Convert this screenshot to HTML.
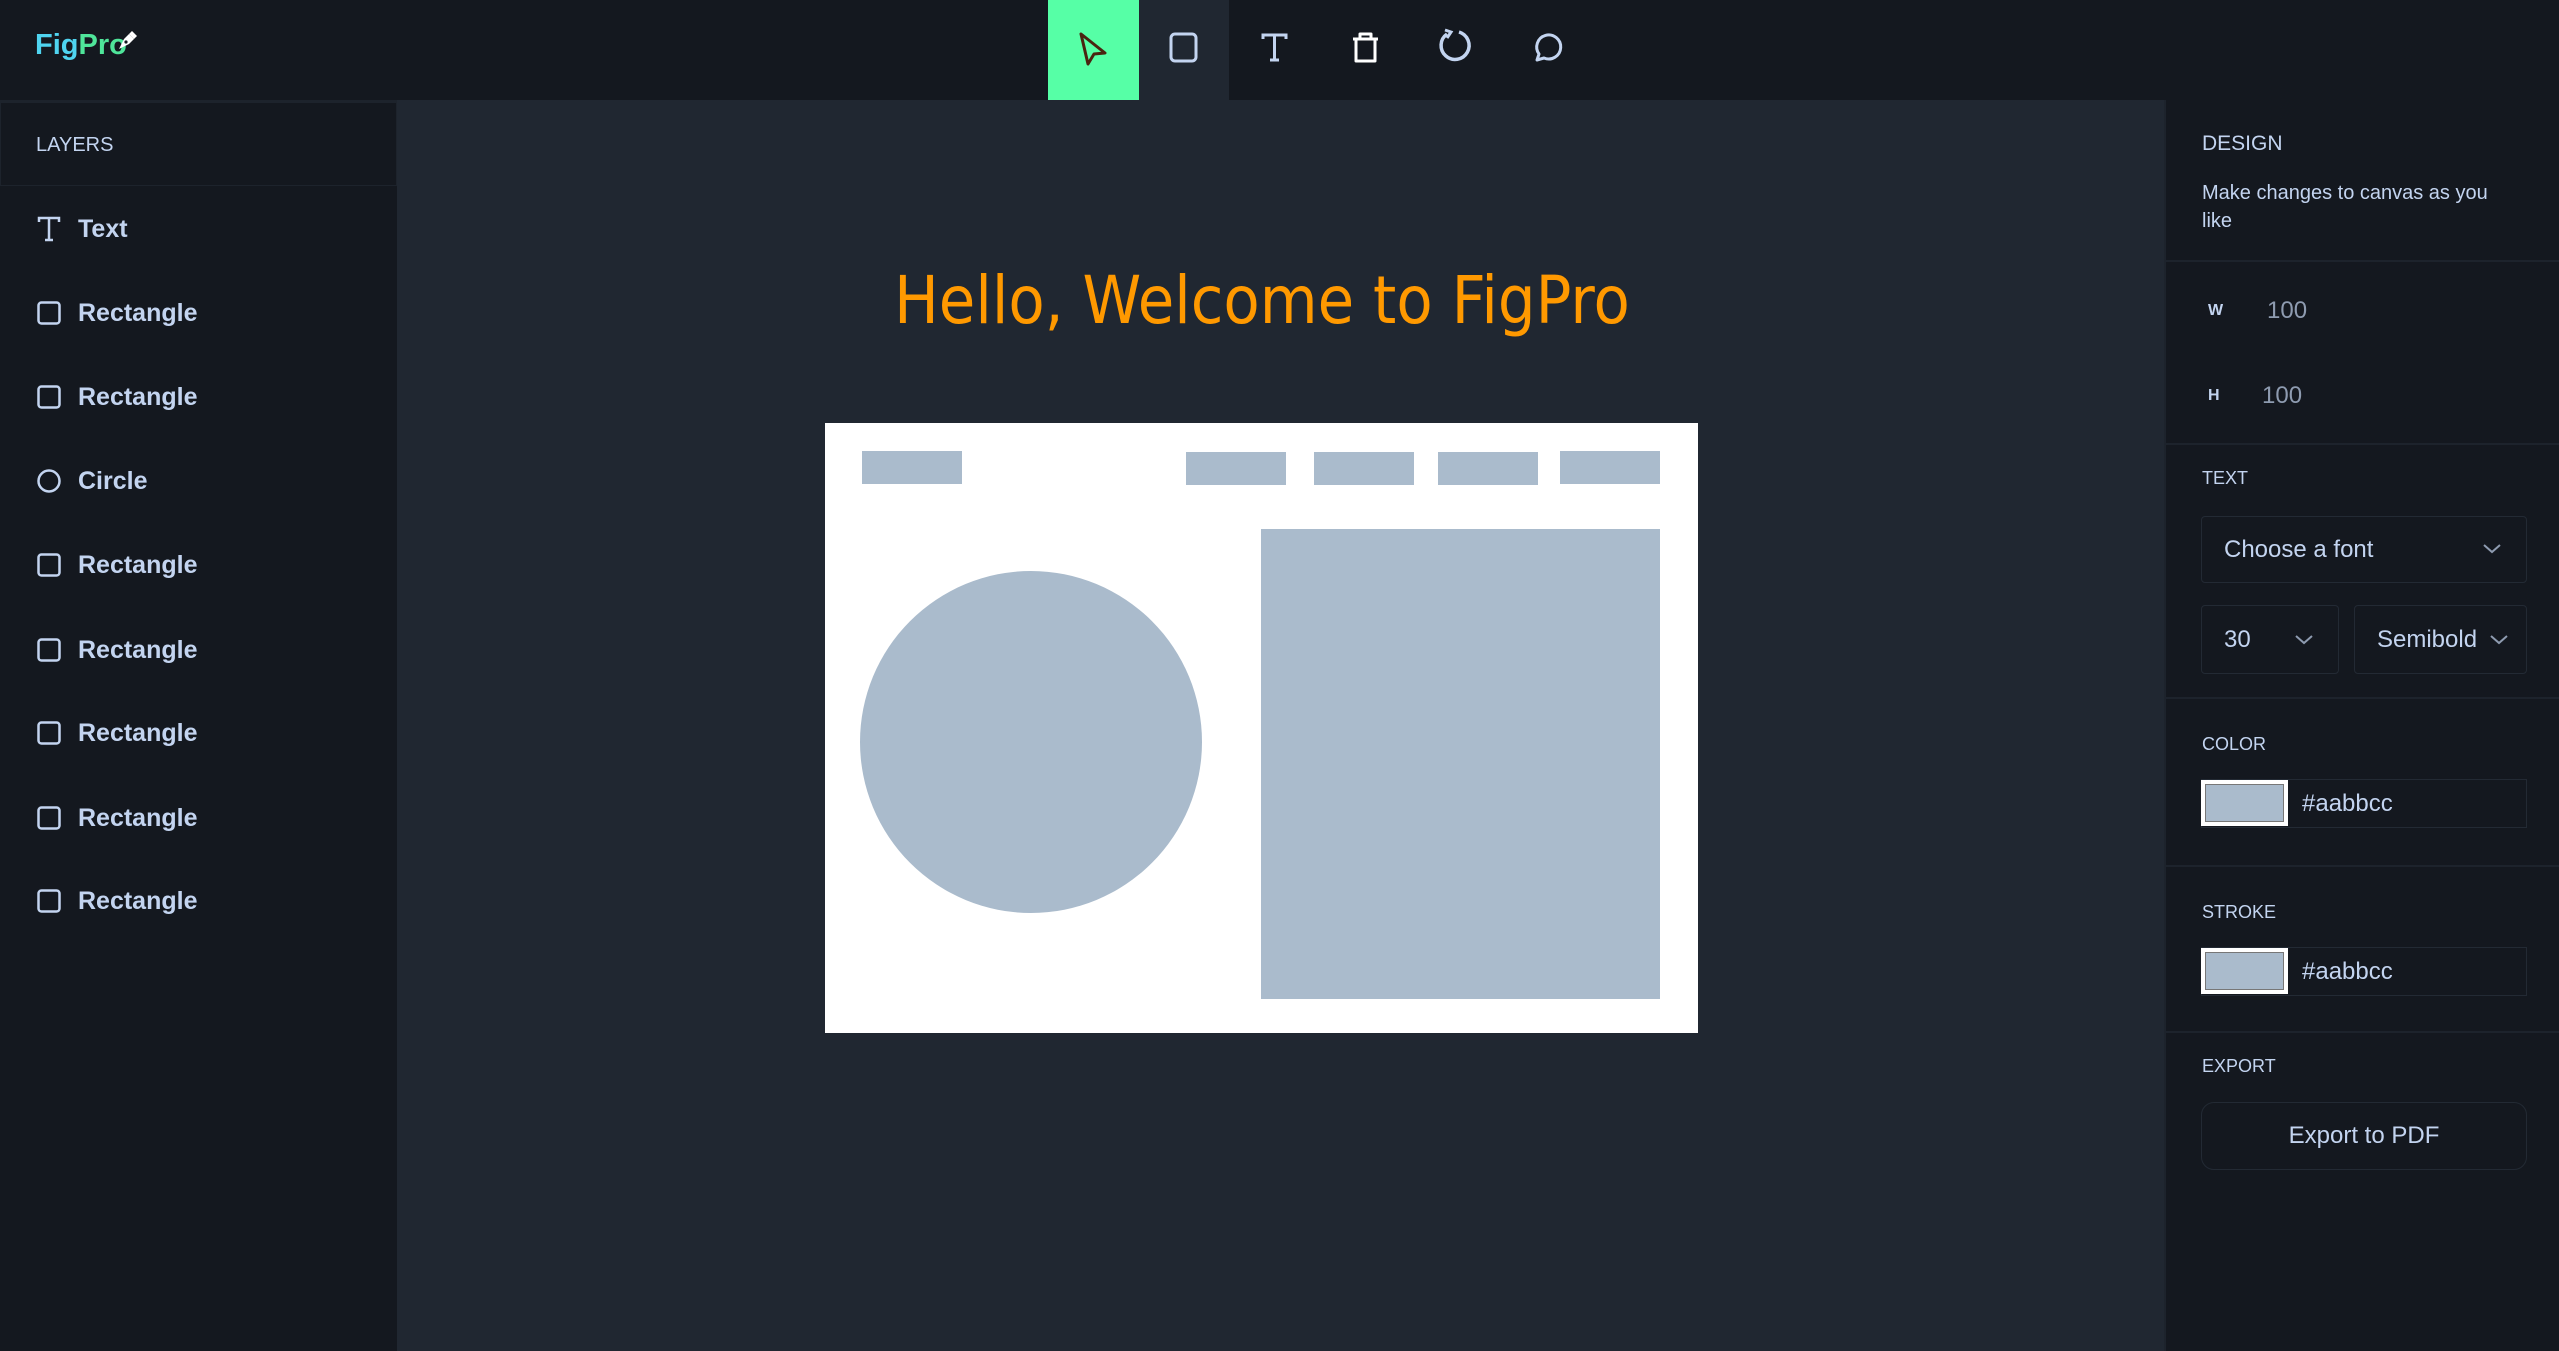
<!DOCTYPE html>
<html><head><meta charset="utf-8"><style>
*{margin:0;padding:0;box-sizing:border-box}
body{width:2559px;height:1351px;background:#202731;font-family:"Liberation Sans",Arial,sans-serif;position:relative;overflow:hidden;color:#c3d4f0}
.abs{position:absolute}
#top{left:0;top:0;width:2559px;height:100px;background:#14181f}
#left{left:0;top:100px;width:397px;height:1251px;background:#14181f;border-top:2px solid #1d232c}
#right{left:2164px;top:100px;width:395px;height:1251px;background:#14181f;border-left:2px solid #1d232c}
.lay{position:absolute;left:37px;font-weight:bold;font-size:25px;color:#c3d4f0;display:flex;align-items:center;height:40px}
.lay svg{margin-right:17px}
.lbl{position:absolute;left:36px;font-size:19px;color:#c3d4f0}
.div{position:absolute;left:0;width:395px;height:2px;background:#1d232c}
.box{position:absolute;border:1.5px solid #232a34;border-radius:4px;font-size:24px;color:#c3d4f0;display:flex;align-items:center}
.sw{position:absolute;left:36px;width:87px;height:46px;background:#fff;padding:4px}
.sw div{width:100%;height:100%;background:#aabbcc;border:1.5px solid #777}
</style></head><body>
<div id="top" class="abs"></div>
<div class="abs" style="left:35px;top:29px;font-size:29px;font-weight:bold"><span style="color:#4fd4f0">Fig</span><span style="color:#4fe59a">Pro</span></div>
<svg class="abs" style="left:116px;top:30px" width="22" height="22" viewBox="0 0 22 22"><path d="M3 19 L8 9 L13 4 L18 9 L13 14 Z" fill="#fff"/><path d="M13 4 L16 1 L21 6 L18 9" fill="#fff"/><circle cx="10" cy="12" r="1.6" fill="#14181f"/></svg>
<div class="abs" style="left:1048px;top:0;width:91px;height:100px;background:#56ffa6"></div>
<div class="abs" style="left:1139px;top:0;width:90px;height:100px;background:#202731"></div>
<svg class="abs" style="left:1073px;top:28px" width="40" height="40" viewBox="0 0 40 40"><path d="M8 6 L32 25 L21 26 L15 36 Z" fill="none" stroke="#4a2410" stroke-width="3" stroke-linejoin="round"/></svg>
<svg class="abs" style="left:1168px;top:31px" width="32" height="32"><rect x="3" y="3" width="25" height="27" rx="4" fill="none" stroke="#c3d4f0" stroke-width="3"/></svg>
<svg class="abs" style="left:1259px;top:31px" width="32" height="32"><path d="M4 8 V4 H27 V8 M15.5 4 V29 M11 29 H20" fill="none" stroke="#c3d4f0" stroke-width="3"/></svg>
<svg class="abs" style="left:1350px;top:30px" width="32" height="34"><path d="M3 9 H28 M10 9 V4 H21 V9 M6 9 V31 H25 V9" fill="none" stroke="#fff" stroke-width="3" stroke-linejoin="round"/></svg>
<svg class="abs" style="left:1437px;top:28px" width="38" height="38"><path d="M10 6 A14 14 0 1 0 22 4" fill="none" stroke="#c3d4f0" stroke-width="3.5"/><path d="M8 2 L14 4 L10 10" fill="none" stroke="#c3d4f0" stroke-width="3"/></svg>
<svg class="abs" style="left:1529px;top:30px" width="36" height="36"><path d="M8 30 L10 24 A12 12 0 1 1 15 28 Z" fill="none" stroke="#c3d4f0" stroke-width="3" stroke-linejoin="round"/></svg>

<div id="left" class="abs">
<div class="abs" style="left:0;top:0;width:397px;height:84px;border:1.5px solid #1d232c"></div>
<div class="abs" style="left:36px;top:32px;font-size:20px;color:#c3d4f0">LAYERS</div>
</div>
<div class="lay" style="top:209px"><svg width="24" height="26"><path d="M2 6 V2 H22 V6 M12 2 V24 M8 24 H16" fill="none" stroke="#c3d4f0" stroke-width="2.5"/></svg>Text</div>
<div class="lay" style="top:293px"><svg width="24" height="24"><rect x="1.5" y="1.5" width="21" height="21" rx="3" fill="none" stroke="#c3d4f0" stroke-width="2.5"/></svg>Rectangle</div>
<div class="lay" style="top:377px"><svg width="24" height="24"><rect x="1.5" y="1.5" width="21" height="21" rx="3" fill="none" stroke="#c3d4f0" stroke-width="2.5"/></svg>Rectangle</div>
<div class="lay" style="top:461px"><svg width="24" height="24"><circle cx="12" cy="12" r="10.5" fill="none" stroke="#c3d4f0" stroke-width="2.5"/></svg>Circle</div>
<div class="lay" style="top:545px"><svg width="24" height="24"><rect x="1.5" y="1.5" width="21" height="21" rx="3" fill="none" stroke="#c3d4f0" stroke-width="2.5"/></svg>Rectangle</div>
<div class="lay" style="top:630px"><svg width="24" height="24"><rect x="1.5" y="1.5" width="21" height="21" rx="3" fill="none" stroke="#c3d4f0" stroke-width="2.5"/></svg>Rectangle</div>
<div class="lay" style="top:713px"><svg width="24" height="24"><rect x="1.5" y="1.5" width="21" height="21" rx="3" fill="none" stroke="#c3d4f0" stroke-width="2.5"/></svg>Rectangle</div>
<div class="lay" style="top:798px"><svg width="24" height="24"><rect x="1.5" y="1.5" width="21" height="21" rx="3" fill="none" stroke="#c3d4f0" stroke-width="2.5"/></svg>Rectangle</div>
<div class="lay" style="top:881px"><svg width="24" height="24"><rect x="1.5" y="1.5" width="21" height="21" rx="3" fill="none" stroke="#c3d4f0" stroke-width="2.5"/></svg>Rectangle</div>

<div class="abs" style="left:830px;top:262px;width:864px;text-align:center;font-family:'Comic Sans MS','DejaVu Sans',cursive;font-size:66px;color:#ff9900;transform:scaleX(0.9);transform-origin:center;white-space:nowrap">Hello, Welcome to FigPro</div>

<div class="abs" style="left:825px;top:423px;width:873px;height:610px;background:#fff">
<div class="abs" style="left:37px;top:28px;width:100px;height:33px;background:#aabbcc"></div>
<div class="abs" style="left:361px;top:29px;width:100px;height:33px;background:#aabbcc"></div>
<div class="abs" style="left:489px;top:29px;width:100px;height:33px;background:#aabbcc"></div>
<div class="abs" style="left:613px;top:29px;width:100px;height:33px;background:#aabbcc"></div>
<div class="abs" style="left:735px;top:28px;width:100px;height:33px;background:#aabbcc"></div>
<div class="abs" style="left:35px;top:148px;width:342px;height:342px;border-radius:50%;background:#aabbcc"></div>
<div class="abs" style="left:436px;top:106px;width:399px;height:470px;background:#aabbcc"></div>
</div>

<div id="right" class="abs">
<div class="lbl" style="top:32px;font-size:21px">DESIGN</div>
<div class="lbl" style="top:79px;font-size:20px;line-height:28px;width:320px">Make changes to canvas as you like</div>
<div class="div" style="top:160px"></div>
<div class="abs" style="left:42px;top:202px;font-size:16px;font-weight:bold">W</div>
<div class="abs" style="left:101px;top:197px;font-size:24px;color:#8e9bb0">100</div>
<div class="abs" style="left:42px;top:287px;font-size:16px;font-weight:bold">H</div>
<div class="abs" style="left:96px;top:282px;font-size:24px;color:#8e9bb0">100</div>
<div class="div" style="top:343px"></div>
<div class="lbl" style="top:368px;font-size:18px">TEXT</div>
<div class="box" style="left:35px;top:416px;width:326px;height:67px;padding-left:22px">Choose a font<svg class="abs" style="left:280px;top:26px" width="20" height="12"><path d="M2 2 L10 9 L18 2" fill="none" stroke="#8e9bb0" stroke-width="2"/></svg></div>
<div class="box" style="left:35px;top:505px;width:138px;height:69px;padding-left:22px">30<svg class="abs" style="left:92px;top:28px" width="20" height="12"><path d="M2 2 L10 9 L18 2" fill="none" stroke="#8e9bb0" stroke-width="2"/></svg></div>
<div class="box" style="left:188px;top:505px;width:173px;height:69px;padding-left:22px">Semibold<svg class="abs" style="left:134px;top:28px" width="20" height="12"><path d="M2 2 L10 9 L18 2" fill="none" stroke="#8e9bb0" stroke-width="2"/></svg></div>
<div class="div" style="top:597px"></div>
<div class="lbl" style="top:634px;font-size:18px">COLOR</div>
<div class="box" style="left:35px;top:679px;width:326px;height:49px;padding-left:100px;border-radius:0">#aabbcc</div>
<div class="sw" style="top:680px;left:35px"><div></div></div>
<div class="div" style="top:765px"></div>
<div class="lbl" style="top:802px;font-size:18px">STROKE</div>
<div class="box" style="left:35px;top:847px;width:326px;height:49px;padding-left:100px;border-radius:0">#aabbcc</div>
<div class="sw" style="top:848px;left:35px"><div></div></div>
<div class="div" style="top:931px"></div>
<div class="lbl" style="top:956px;font-size:18px">EXPORT</div>
<div class="box" style="left:35px;top:1002px;width:326px;height:68px;border-radius:13px;justify-content:center">Export to PDF</div>
</div>
</body></html>
